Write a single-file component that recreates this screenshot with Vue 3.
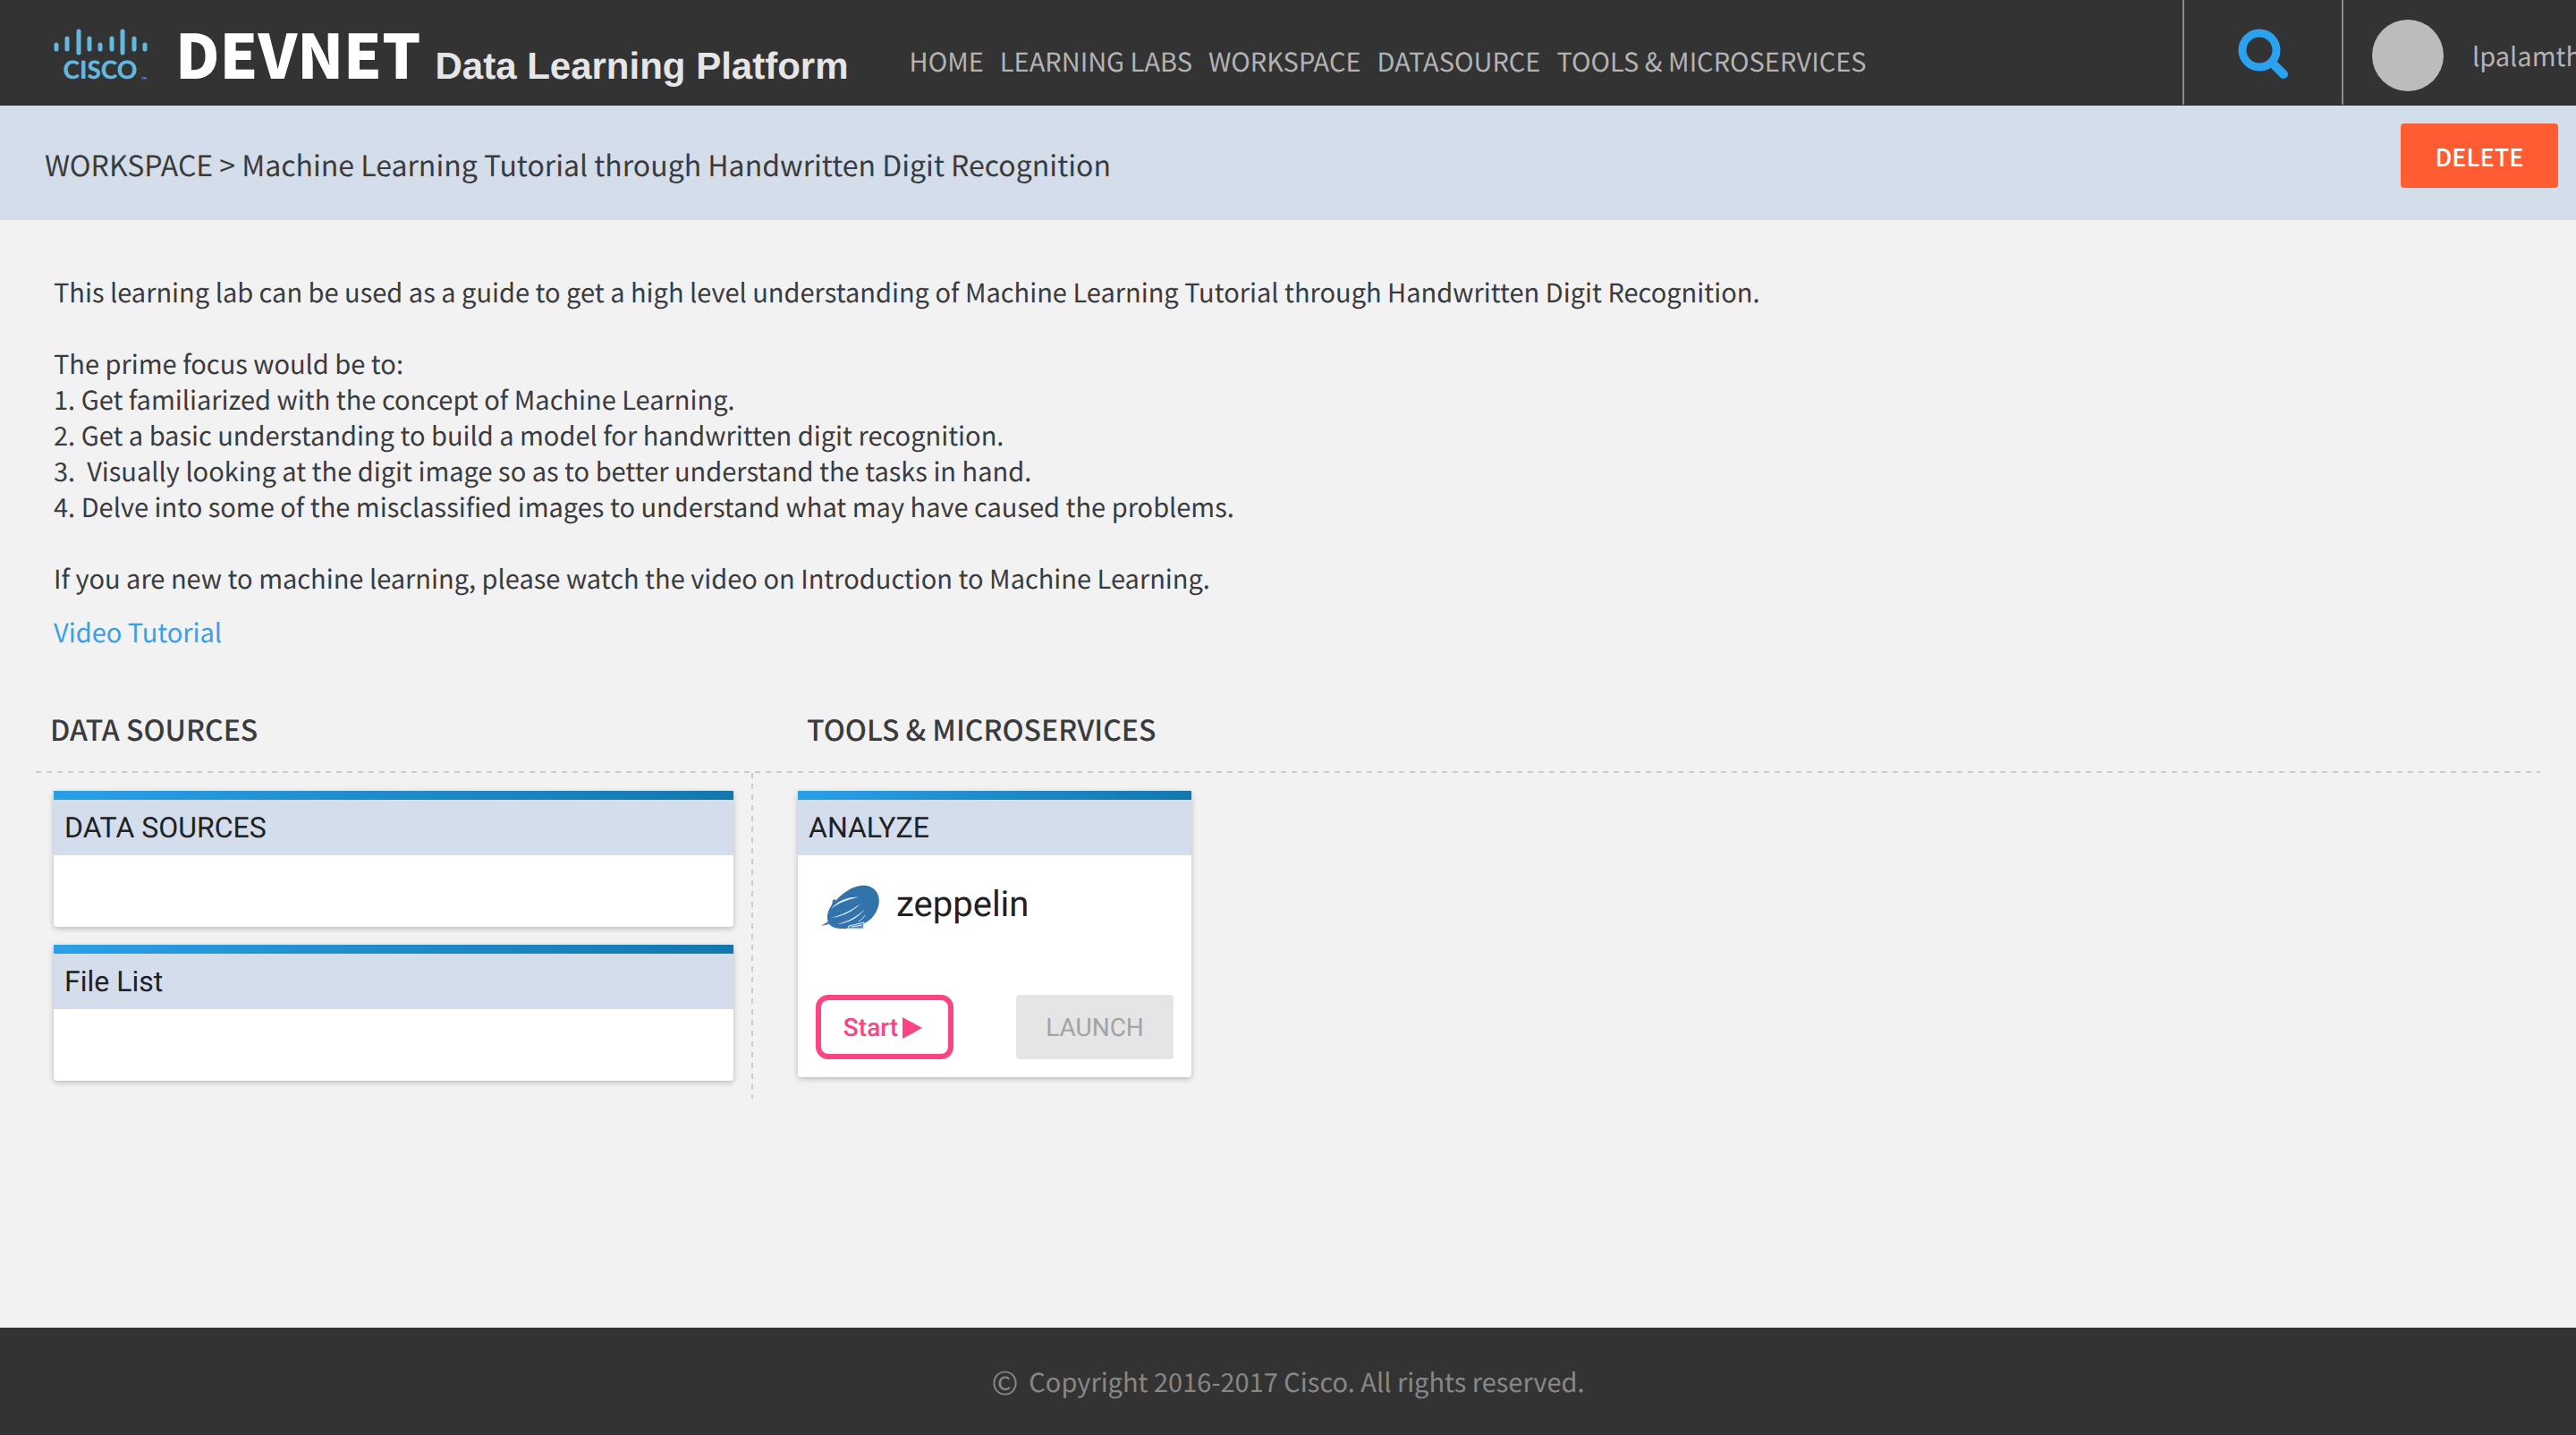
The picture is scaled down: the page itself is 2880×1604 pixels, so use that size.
<script setup>
const navItems = ['HOME', 'LEARNING LABS', 'WORKSPACE', 'DATASOURCE', 'TOOLS & MICROSERVICES']

const logoBars = [
  { x: 3, top: 18, bottom: 23 },
  { x: 15, top: 11, bottom: 23 },
  { x: 28, top: 3, bottom: 27 },
  { x: 40, top: 11, bottom: 23 },
  { x: 52, top: 18, bottom: 23 },
  { x: 65, top: 11, bottom: 23 },
  { x: 77, top: 3, bottom: 27 },
  { x: 90, top: 11, bottom: 23 },
  { x: 102, top: 18, bottom: 23 }
]

const sources = ['DATA SOURCES', 'File List']

const description = `This learning lab can be used as a guide to get a high level understanding of Machine Learning Tutorial through Handwritten Digit Recognition.

The prime focus would be to:
1. Get familiarized with the concept of Machine Learning.
2. Get a basic understanding to build a model for handwritten digit recognition.
3.  Visually looking at the digit image so as to better understand the tasks in hand.
4. Delve into some of the misclassified images to understand what may have caused the problems.

If you are new to machine learning, please watch the video on Introduction to Machine Learning.`
</script>

<template>
  <div class="page">
    <header class="topbar">
      <a class="brand" href="#">
        <svg class="cisco" viewBox="0 0 108 60" aria-label="Cisco">
          <line
            v-for="bar in logoBars"
            :key="bar.x"
            :x1="bar.x"
            :x2="bar.x"
            :y1="bar.top"
            :y2="bar.bottom"
          />
          <text x="52" y="56" class="cisco-name">CISCO</text>
          <text x="98" y="60" class="cisco-mark">™</text>
        </svg>
        <span class="devnet">DEVNET</span>
        <span class="platform">Data Learning Platform</span>
      </a>
      <nav class="nav">
        <a v-for="item in navItems" :key="item" href="#">{{ item }}</a>
      </nav>
      <button class="search" type="button" aria-label="Search">
        <svg viewBox="0 0 56 56">
          <circle cx="24" cy="24" r="19" />
          <path d="M38 38 L51 51" />
        </svg>
      </button>
      <div class="user">
        <span class="avatar"></span>
        <span class="username">lpalamth</span>
      </div>
    </header>

    <div class="crumbs">
      <h1>WORKSPACE &gt; Machine Learning Tutorial through Handwritten Digit Recognition</h1>
      <button class="delete" type="button">DELETE</button>
    </div>

    <main class="content">
      <p class="description">{{ description }}</p>
      <a class="video" href="#">Video Tutorial</a>

      <div class="headings">
        <h2>DATA SOURCES</h2>
        <h2 class="tools-heading">TOOLS &amp; MICROSERVICES</h2>
      </div>
      <div class="columns">
        <section class="sources">
          <article v-for="name in sources" :key="name" class="card">
            <h3>{{ name }}</h3>
            <div class="empty"></div>
          </article>
        </section>
        <section class="tools">
          <article class="card tool">
            <h3>ANALYZE</h3>
            <div class="tool-name">
              <svg class="zeppelin" viewBox="0 0 66 50" aria-hidden="true">
                <path d="M0 46 L8 41 L9 44 Z M13 17 L16 16 L16 23 L12 24 Z" fill="#3a78ad" />
                <path
                  d="M10 45 C4 38 7 26 17 17 C27 6 40 -1 51 1 C62 3 67 13 64 24 C61 36 51 44 38 47 C27 50 15 50 10 45 Z"
                  fill="#3273ab"
                />
                <path
                  d="M11 27 C19 18 30 13 42 14 C30 16 20 20 11 27 Z M11 37 C22 34 34 29 44 21 C36 30 22 36 11 37 Z M18 44 C30 41 40 36 49 27 C42 37 30 43 18 44 Z"
                  fill="#e6eff7"
                />
                <path d="M31 46 L48 42 L47 49 L30 49 Z" fill="#4f8abb" stroke="#dce9f4" stroke-width="1" />
                <path d="M34 47 L46 45 M42 41 C46 38 48 36 49 34" fill="none" stroke="#dce9f4" stroke-width="1" />
              </svg>
              <span>zeppelin</span>
            </div>
            <div class="actions">
              <button class="start" type="button">
                Start
                <svg viewBox="0 0 22 24" aria-hidden="true"><path d="M0 0 L22 12 L0 24 Z" /></svg>
              </button>
              <button class="launch" type="button" disabled>LAUNCH</button>
            </div>
          </article>
        </section>
      </div>
    </main>

    <footer class="footer">
      <span class="copyright-mark">©</span>
      <span>Copyright 2016-2017 Cisco. All rights reserved.</span>
    </footer>
  </div>
</template>

<style>
body {
  margin: 0;
}
</style>

<style scoped>
.page {
  display: flex;
  flex-direction: column;
  min-height: 100vh;
  background: #f2f2f2;
  color: #3a3b3d;
  font-family: "Noto Sans CJK SC", "Noto Sans", sans-serif;
  font-size: 29px;
  line-height: 40px;
  text-rendering: geometricPrecision;
}

.page * {
  box-sizing: border-box;
}

a {
  color: inherit;
  text-decoration: none;
}

h1,
h2,
h3,
p {
  margin: 0;
}

button {
  padding: 2px 0 0;
  border: 0;
  font-size: 28px;
  line-height: 40px;
  text-rendering: inherit;
}

.topbar {
  display: flex;
  height: 118px;
  overflow: hidden;
  background: #333;
  border-bottom: 1px solid #2b2b30;
  color: #b3b3b3;
}

.brand {
  display: flex;
  flex: none;
  align-items: baseline;
  padding: 32px 0 0 60px;
  white-space: nowrap;
}

.cisco {
  width: 108px;
  height: 60px;
  align-self: flex-start;
  overflow: visible;
  margin-right: 28px;
}

.cisco line {
  stroke: #64b8e0;
  stroke-width: 5px;
  stroke-linecap: round;
}

.cisco text {
  fill: #64b8e0;
  font-family: Lato, sans-serif;
}

.cisco-name {
  font-size: 28px;
  font-weight: 900;
  text-anchor: middle;
}

.cisco-mark {
  font-size: 8px;
}

.devnet {
  color: #fff;
  font-size: 68px;
  font-weight: 900;
  line-height: 54px;
}

.platform {
  margin-left: 16px;
  color: #e6e6e6;
  font-family: "Liberation Sans", sans-serif;
  font-size: 42px;
  font-weight: 700;
}

.nav {
  display: flex;
  flex: 1;
  gap: 18px;
  padding: 48px 0 0 68px;
  white-space: nowrap;
}

.search {
  display: flex;
  flex: none;
  align-items: center;
  justify-content: center;
  width: 178px;
  border-left: 2px solid #8a8a8a;
  background: none;
}

.search svg {
  width: 56px;
  height: 56px;
}

.search circle {
  fill: none;
  stroke: #2ba2f0;
  stroke-width: 9px;
}

.search path {
  stroke: #2ba2f0;
  stroke-width: 10px;
  stroke-linecap: round;
}

.user {
  display: flex;
  flex: none;
  gap: 32px;
  align-items: center;
  width: 262px;
  padding: 6px 0 0 32px;
  overflow: hidden;
  border-left: 2px solid #8a8a8a;
}

.avatar {
  flex: none;
  width: 80px;
  height: 80px;
  border-radius: 50%;
  background: #bcbcbc;
}

.crumbs {
  display: flex;
  align-items: flex-start;
  justify-content: space-between;
  height: 128px;
  padding: 20px 20px 0 50px;
  background: #d4ddea;
}

.crumbs h1 {
  padding-top: 26px;
  font-size: 32px;
  font-weight: 400;
  line-height: 40px;
}

.delete {
  width: 176px;
  height: 72px;
  border-radius: 4px;
  background: #ff5c33;
  color: #fff;
  font-family: inherit;
  font-size: 27px;
  font-weight: 500;
}

.content {
  flex: 1;
  padding: 60px 40px;
}

.description {
  padding: 0 20px;
  white-space: pre-wrap;
}

.video {
  display: block;
  width: fit-content;
  margin: 20px 20px 0;
  color: #3a9fe5;
}

.headings {
  display: grid;
  grid-template-columns: 2fr 5fr;
  margin-top: 65px;
  padding-bottom: 25px;
  background: repeating-linear-gradient(90deg, #ccc 0 6px, transparent 6px 12px) bottom / 100% 2px no-repeat;
}

.headings h2 {
  padding-left: 16px;
  font-size: 32px;
  font-weight: 500;
  line-height: 48px;
}

.headings .tools-heading {
  padding-left: 62px;
}

.columns {
  display: grid;
  grid-template-columns: 2fr 5fr;
}

.sources {
  display: flex;
  flex-direction: column;
  gap: 20px;
  padding: 20px;
}

.tools {
  padding: 20px 52px;
  background: repeating-linear-gradient(#ccc 0 6px, transparent 6px 12px) left / 2px 100% no-repeat;
}

.card {
  overflow: hidden;
  border-radius: 0 0 4px 4px;
  background: #fff;
  box-shadow: 0 2px 6px rgba(0, 0, 0, 0.24);
  color: #212121;
  font-family: Roboto, sans-serif;
}

.card::before {
  display: block;
  height: 10px;
  background: linear-gradient(90deg, #2a9fe8, #1178ae);
  content: "";
}

.card h3 {
  height: 62px;
  padding: 0 12px;
  background: #d4ddec;
  font-size: 32px;
  font-weight: 400;
  line-height: 62px;
}

.empty {
  height: 80px;
}

.tool {
  width: 440px;
}

.tool-name {
  display: flex;
  gap: 18px;
  align-items: flex-start;
  padding: 33px 26px 0;
  font-size: 40px;
  line-height: 44px;
}

.zeppelin {
  width: 66px;
  height: 50px;
}

.actions {
  display: flex;
  justify-content: space-between;
  padding: 73px 20px 20px;
}

.start,
.launch {
  height: 72px;
  font-family: inherit;
}

.start {
  display: flex;
  gap: 5px;
  align-items: center;
  justify-content: center;
  width: 154px;
  padding-right: 4px;
  border: 6px solid #fc4482;
  border-radius: 14px;
  background: #fff;
  color: #fc4482;
  font-weight: 500;
}

.start svg {
  width: 22px;
  height: 24px;
  fill: #fc4482;
}

.launch {
  width: 176px;
  border-radius: 4px;
  background: #e5e5e5;
  color: #a3a3a3;
}

.footer {
  display: flex;
  gap: 12px;
  align-items: center;
  justify-content: center;
  height: 120px;
  background: #333;
  color: #878787;
}

.copyright-mark {
  font-size: 36px;
}
</style>
